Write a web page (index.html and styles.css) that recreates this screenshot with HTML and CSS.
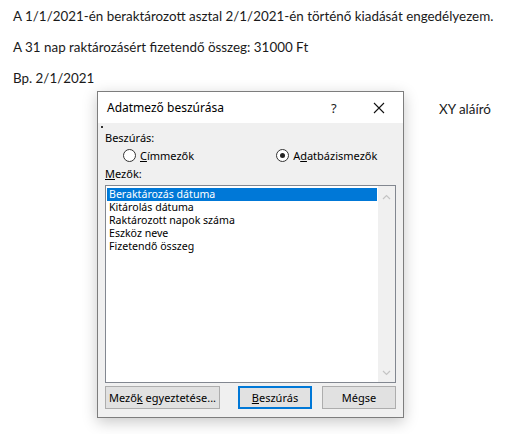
FILE: index.html
```html
<!DOCTYPE html>
<html>
<head>
<meta charset="utf-8">
<link rel="stylesheet" href="styles.css">
</head>
<body>
<div class="doc">
  <p class="para">A 1/1/2021-én beraktározott asztal 2/1/2021-én történő kiadását engedélyezem.</p>
  <p class="para">A 31 nap raktározásért fizetendő összeg: 31000 Ft</p>
  <p class="para">Bp. 2/1/2021</p>
  <p class="para sign">XY aláíró</p>
</div>

<div class="dialog">
  <div class="titlebar">
    <span class="title">Adatmező beszúrása</span>
    <span class="help">?</span>
    <svg class="close" width="12" height="12" viewBox="0 0 12 12"><path d="M1 1L11 11M11 1L1 11" stroke="#111" stroke-width="1.1"/></svg>
  </div>
  <div class="body">
    <span class="focusdot"></span>
    <div class="label">Beszúrás:</div>
    <div class="radios">
      <label class="radio r1"><span class="circle"></span><span><u>C</u>ímmezők</span></label>
      <label class="radio r2"><span class="circle on"></span><span>A<u>d</u>atbázismezők</span></label>
    </div>
    <div class="label"><u>M</u>ezők:</div>
    <div class="listbox">
      <ul class="items">
        <li class="sel">Beraktározás dátuma</li>
        <li>Kitárolás dátuma</li>
        <li>Raktározott napok száma</li>
        <li>Eszköz neve</li>
        <li>Fizetendő összeg</li>
      </ul>
      <div class="scroll">
        <svg width="9" height="6" viewBox="0 0 9 6"><path d="M1 5L4.5 1.5L8 5" fill="none" stroke="#c4c4c4" stroke-width="1.2"/></svg>
        <svg width="9" height="6" viewBox="0 0 9 6"><path d="M1 1L4.5 4.5L8 1" fill="none" stroke="#c4c4c4" stroke-width="1.2"/></svg>
      </div>
    </div>
    <div class="buttons">
      <button class="btn b1">Mező<u>k</u> egyeztetése...</button>
      <button class="btn b2 default"><u>B</u>eszúrás</button>
      <button class="btn b3">Mégse</button>
    </div>
  </div>
</div>
</body>
</html>
```

FILE: styles.css
```css
html, body {
  margin: 0;
  padding: 0;
  background: #ffffff;
}
.doc {
  padding: 7px 0 0 13px;
  font-family: Lato, "Liberation Sans", sans-serif;
  font-size: 13.4px;
  color: #1a1a1a;
}
.para {
  margin: 0 0 13px 0;
  line-height: 18px;
  height: 18px;
  white-space: nowrap;
}
.sign {
  padding-left: 426px;
  margin-top: 8px;
}
.dialog {
  position: absolute;
  left: 97px;
  top: 91px;
  width: 305px;
  height: 325px;
  border: 1px solid #7d7d7d;
  background: #f0f0f0;
  box-shadow: 0 4px 14px rgba(0,0,0,0.22);
  font-family: "Noto Sans", "DejaVu Sans", sans-serif;
  font-size: 11px;
  color: #000;
  display: flex;
  flex-direction: column;
}
.titlebar {
  height: 31px;
  background: #fff;
  display: flex;
  align-items: center;
  padding-left: 9px;
  flex: none;
}
.title {
  font-size: 12px;
  flex: 1;
}
.help {
  font-size: 13px;
  width: 42px;
  color: #222;
}
.close {
  margin-right: 18px;
}
.body {
  position: relative;
  padding: 8px 7px 0 7px;
  display: flex;
  flex-direction: column;
}
.focusdot {
  position: absolute;
  left: 3px;
  top: 3px;
  width: 2px;
  height: 2px;
  background: #333;
}
.label {
  height: 14px;
  line-height: 14px;
}
.radios {
  display: flex;
  height: 20px;
  align-items: center;
}
.radio {
  display: flex;
  align-items: center;
  gap: 4px;
}
.r1 { margin-left: 18px; }
.r2 { margin-left: 82px; }
.circle {
  width: 11px;
  height: 11px;
  border: 1px solid #333;
  border-radius: 50%;
  background: #fff;
  position: relative;
}
.circle.on::after {
  content: "";
  position: absolute;
  left: 3px;
  top: 3px;
  width: 5px;
  height: 5px;
  border-radius: 50%;
  background: #222;
}
.radios + .label {
  margin-top: 2px;
}
.listbox {
  margin-top: 4px;
  height: 196px;
  border: 1px solid #828790;
  background: #fff;
  display: flex;
}
.items {
  list-style: none;
  margin: 0;
  padding: 2px 0 0 1px;
  flex: 1;
  font-size: 10.6px;
}
.items li {
  height: 13px;
  line-height: 13px;
  padding-left: 2px;
  margin-right: 1px;
}
.items li.sel {
  background: #0078d7;
  color: #fff;
}
.scroll {
  width: 17px;
  background: #f0f0f0;
  display: flex;
  flex-direction: column;
  justify-content: space-between;
  align-items: center;
  padding: 8px 0 6px 0;
}
.buttons {
  display: flex;
  margin-top: 3px;
  height: 23px;
}
.btn {
  font-family: "Noto Sans", "DejaVu Sans", sans-serif;
  font-size: 11px;
  height: 23px;
  border: 1px solid #adadad;
  background: #e1e1e1;
  color: #000;
  padding: 0;
  margin: 0;
}
.b1 { width: 115px; }
.b2 { width: 74px; margin-left: 18px; }
.b3 { width: 74px; margin-left: 10px; }
.default {
  border: 2px solid #0078d7;
}
```
